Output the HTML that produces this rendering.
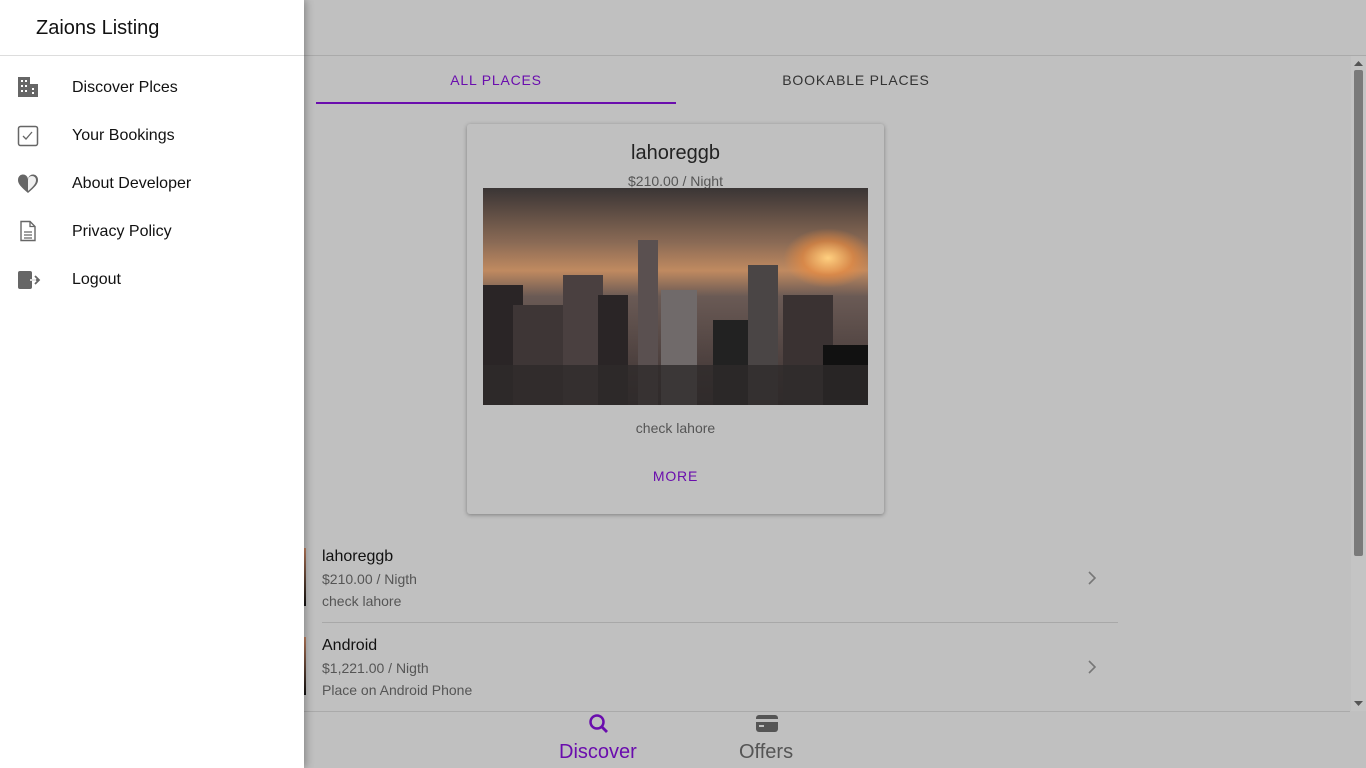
<!DOCTYPE html>
<html><head><meta charset="utf-8">
<style>
*{box-sizing:border-box;margin:0;padding:0}
body{width:1366px;height:768px;overflow:hidden;background:#c0c0c0;font-family:"Liberation Sans",sans-serif;position:relative}
.hdr{position:absolute;left:0;top:0;width:1366px;height:56px;background:#c0c0c0;border-bottom:1px solid #aaa}
.tabs{position:absolute;left:316px;top:56px;width:720px;height:48px}
.tab{position:absolute;top:0;width:360px;height:48px;text-align:center;line-height:48px;font-size:14px;letter-spacing:.8px}
.card{position:absolute;left:467px;top:124px;width:417px;height:390px;background:#c0c0c0;border-radius:3px;box-shadow:0 1px 4px rgba(0,0,0,.35)}
.img{position:absolute;left:16px;top:64px;width:385px;height:217px;overflow:hidden;background:linear-gradient(#3a3535 0%,#8a6a55 25%,#c08a60 38%,#6a5a55 50%,#3a3030 100%)}
.sun{position:absolute;left:300px;top:40px;width:90px;height:60px;background:radial-gradient(#ffd080,rgba(240,140,60,.6) 40%,transparent 70%)}
.b{position:absolute;bottom:0;background:#2a2526}
.item{position:absolute;left:322px;font-size:14px;color:#555}
.sb{position:absolute;right:0;top:56px;width:15px;height:655px;background:#c4c4c4}
.drawer{position:absolute;left:0;top:0;width:304px;height:768px;background:#fff;box-shadow:2px 0 8px rgba(0,0,0,.3)}
.dt{height:56px;border-bottom:1px solid #ddd;font-size:20px;line-height:56px;padding-left:36px;color:#111}
.mi{position:absolute;left:72px;font-size:16px;color:#111}
.ic{position:absolute;left:17px}
</style></head><body>
<div class="hdr"></div>
<div class="tabs">
<div class="tab" style="left:0;color:#6a0dad">ALL PLACES</div>
<div class="tab" style="left:360px;color:#333">BOOKABLE PLACES</div>
<div style="position:absolute;left:0;top:46px;width:360px;height:2px;background:#6a0dad"></div>
</div>
<div class="card">
<div style="position:absolute;top:18px;width:100%;text-align:center;font-size:20px;color:#222">lahoreggb</div>
<div style="position:absolute;top:49px;width:100%;text-align:center;font-size:14px;color:#555">$210.00 / Night</div>
<div class="img">
<div class="sun"></div>
<div class="b" style="left:0;width:40px;height:120px"></div>
<div class="b" style="left:30px;width:50px;height:100px;background:#3e3636"></div>
<div class="b" style="left:80px;width:40px;height:130px;background:#4a4040"></div>
<div class="b" style="left:115px;width:30px;height:110px"></div>
<div class="b" style="left:155px;width:20px;height:165px;background:#5a5050"></div>
<div class="b" style="left:178px;width:36px;height:115px;background:#706a6a"></div>
<div class="b" style="left:230px;width:60px;height:85px;background:#222"></div>
<div class="b" style="left:265px;width:30px;height:140px;background:#4a4545"></div>
<div class="b" style="left:300px;width:50px;height:110px;background:#3a3232"></div>
<div class="b" style="left:340px;width:45px;height:60px;background:#111"></div>
<div class="b" style="left:0;width:385px;height:40px;background:#2e2a2a;opacity:.8"></div>
</div>
<div style="position:absolute;top:296px;width:100%;text-align:center;font-size:14px;color:#555">check lahore</div>
<div style="position:absolute;top:344px;width:100%;text-align:center;font-size:14px;color:#6a0dad;letter-spacing:.8px">MORE</div>
</div>
<div style="position:absolute;left:304px;top:548px;width:2px;height:58px;background:linear-gradient(#c08060,#111)"></div>
<div class="item" style="top:548px;color:#111;font-size:16px">lahoreggb</div>
<div class="item" style="top:571px">$210.00 / Nigth</div>
<div class="item" style="top:593px">check lahore</div>
<div style="position:absolute;left:322px;top:622px;width:796px;height:1px;background:#a8a8a8"></div>
<div style="position:absolute;left:304px;top:637px;width:2px;height:58px;background:linear-gradient(#c08060,#111)"></div>
<div class="item" style="top:637px;color:#111;font-size:16px">Android</div>
<div class="item" style="top:660px">$1,221.00 / Nigth</div>
<div class="item" style="top:682px">Place on Android Phone</div>
<svg style="position:absolute;left:1084px;top:570px" width="16" height="16"><path d="M5 2l6 6-6 6" stroke="#777" stroke-width="1.6" fill="none"/></svg>
<svg style="position:absolute;left:1084px;top:659px" width="16" height="16"><path d="M5 2l6 6-6 6" stroke="#777" stroke-width="1.6" fill="none"/></svg>
<div style="position:absolute;left:0;top:711px;width:1350px;height:1px;background:#aaa"></div>
<svg style="position:absolute;left:588px;top:713px" width="22" height="22"><circle cx="9" cy="9" r="6.5" stroke="#6a0dad" stroke-width="2.5" fill="none"/><path d="M14 14l5 5" stroke="#6a0dad" stroke-width="2.8"/></svg>
<div style="position:absolute;left:559px;top:741px;font-size:20px;color:#6a0dad">Discover</div>
<svg style="position:absolute;left:755px;top:714px" width="24" height="20"><rect x="1" y="1" width="22" height="17" rx="3" fill="#555"/><rect x="1" y="5" width="22" height="3" fill="#c0c0c0"/><rect x="4" y="11" width="5" height="2" fill="#c0c0c0"/></svg>
<div style="position:absolute;left:739px;top:741px;font-size:20px;color:#555">Offers</div>
<div class="sb"><svg style="position:absolute;left:3px;top:4px" width="9" height="6"><path d="M0 6L4.5 1 9 6z" fill="#555"/></svg><div style="position:absolute;left:3px;top:14px;width:9px;height:486px;background:#7a7a7a;border-radius:2px"></div><svg style="position:absolute;left:3px;bottom:4px" width="9" height="6"><path d="M0 0L4.5 5 9 0z" fill="#555"/></svg></div>
<div class="drawer">
<div class="dt">Zaions Listing</div>
<svg class="ic" style="top:76px" width="22" height="22"><rect x="1" y="1" width="12" height="20" fill="#666"/><rect x="13" y="8" width="8" height="13" fill="#666"/><g fill="#fff"><rect x="4" y="4" width="2" height="2"/><rect x="8" y="4" width="2" height="2"/><rect x="4" y="9" width="2" height="2"/><rect x="8" y="9" width="2" height="2"/><rect x="4" y="14" width="2" height="2"/><rect x="8" y="14" width="2" height="2"/><rect x="15" y="12" width="2" height="2"/><rect x="15" y="16" width="2" height="2"/></g></svg>
<div class="mi" style="top:79px">Discover Plces</div>
<svg class="ic" style="top:125px" width="22" height="22"><rect x="1.5" y="1.5" width="19" height="19" rx="2" stroke="#666" stroke-width="1.5" fill="none"/><path d="M6 11l3 3 6-7" stroke="#666" stroke-width="1.3" fill="none"/></svg>
<div class="mi" style="top:127px">Your Bookings</div>
<svg class="ic" style="top:173px" width="22" height="22"><path d="M11 20C4 14 1 11 1 7a5 5 0 0 1 10-1 5 5 0 0 1 10 1c0 4-3 7-10 13z" fill="#666"/><path d="M11 7a4 4 0 0 1 8 0c0 3-2 6-8 11z" fill="#fff" opacity=".9"/></svg>
<div class="mi" style="top:175px">About Developer</div>
<svg class="ic" style="top:220px" width="22" height="22"><path d="M4 1.5h9l5 5v14H4z" stroke="#666" stroke-width="1.4" fill="none"/><path d="M13 1.5v5h5M7 12h8M7 15h8M7 18h8" stroke="#666" stroke-width="1.3" fill="none"/></svg>
<div class="mi" style="top:223px">Privacy Policy</div>
<svg class="ic" style="top:269px" width="24" height="22"><rect x="1" y="2" width="14" height="18" rx="2" fill="#666"/><path d="M11 11h10M18 7l4 4-4 4" stroke="#666" stroke-width="1.8" fill="none"/><path d="M13 11h6" stroke="#fff" stroke-width="1.5"/></svg>
<div class="mi" style="top:271px">Logout</div>
</div>
</body></html>
